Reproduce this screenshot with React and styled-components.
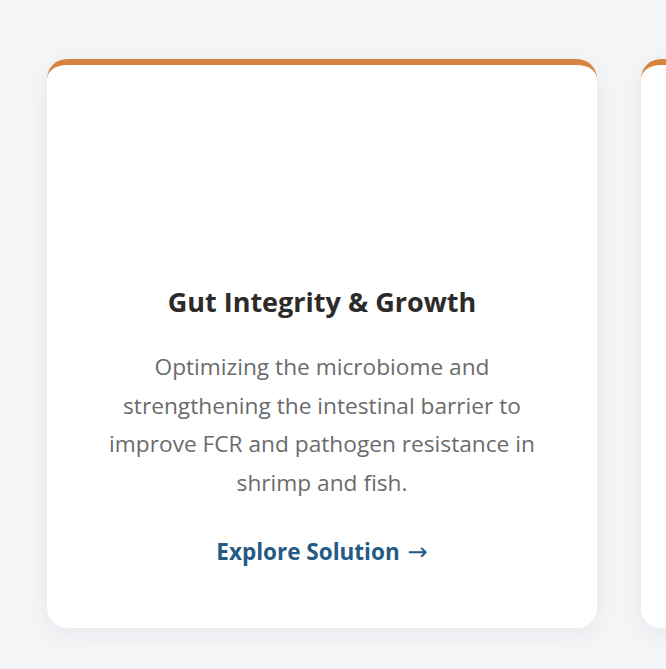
import React from 'react';
import styled, { createGlobalStyle } from 'styled-components';

const GlobalStyle = createGlobalStyle`
    body {
        margin: 0;
        background: #f4f5f7;
        font-family: 'Open Sans', 'Noto Sans', sans-serif;
        overflow: hidden;
    }
`

const solutions = [
    {
        title: 'Gut Integrity & Growth',
        text: 'Optimizing the microbiome and strengthening the intestinal barrier to improve FCR and pathogen resistance in shrimp and fish.',
    },
];

const App = () => {
    return (
        <>
            <GlobalStyle />
            <Section>
                <Track>
                    {solutions.map((s) => (
                        <Card key={s.title}>
                            <IconSlot />
                            <Title>{s.title}</Title>
                            <Text>{s.text}</Text>
                            <Explore href='#'>Explore Solution <Arrow>→</Arrow></Explore>
                        </Card>
                    ))}
                    {/* next card, peeking in from the right edge */}
                    <Card aria-hidden='true' />
                </Track>
            </Section>
        </>
    );
}

const Section = styled.section`
    padding: 59px 0 40px 47px;
    width: 100%;
    box-sizing: border-box;
    overflow: hidden;
`

const Track = styled.div`
    display: flex;
    gap: 44px;
`

const Card = styled.div`
    flex: 0 0 550px;
    box-sizing: border-box;
    height: 569px;
    background: #fff;
    border-top: 6px solid #d6843f;
    border-radius: 20px;
    box-shadow: 0 6px 24px rgba(20, 30, 50, 0.06);
    padding: 40px 50px;
    display: flex;
    flex-direction: column;
    align-items: center;
    text-align: center;
`

const IconSlot = styled.div`
    height: 150px;
    margin-bottom: 30px;
`

const Title = styled.h3`
    margin: 0 0 29px;
    font-size: 27px;
    line-height: 34px;
    font-weight: 700;
    color: #2d2b29;
`

const Text = styled.p`
    margin: 0 0 33px;
    font-size: 22.7px;
    line-height: 38.5px;
    color: #6b6b6b;
`

const Explore = styled.a`
    font-size: 22.5px;
    line-height: 33px;
    font-weight: 700;
    color: #245a85;
    text-decoration: none;
`

const Arrow = styled.span`
    margin-left: 2px;
    font-family: 'DejaVu Sans', sans-serif;
    font-weight: 400;
    font-size: 24px;
`

export default App;
